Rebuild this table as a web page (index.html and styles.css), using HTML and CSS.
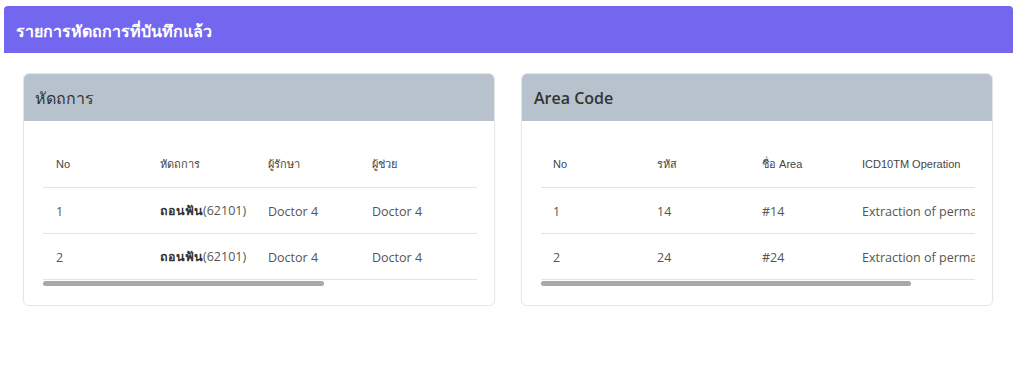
FILE: index.html
```html
<!DOCTYPE html>
<html lang="th">
<head>
<meta charset="utf-8">
<title>รายการหัดถการที่บันทึกแล้ว</title>
<link rel="stylesheet" href="styles.css">
</head>
<body>
<div class="page">
  <header class="page-bar">รายการหัดถการที่บันทึกแล้ว</header>
  <div class="cards">
    <section class="card">
      <div class="card-head">หัดถการ</div>
      <div class="card-body">
        <div class="scroller">
          <table class="grid grid-proc">
            <thead>
              <tr><th>No</th><th>หัดถการ</th><th>ผู้รักษา</th><th>ผู้ช่วย</th><th></th></tr>
            </thead>
            <tbody>
              <tr><td>1</td><td><b>ถอนฟัน</b>(62101)</td><td>Doctor 4</td><td>Doctor 4</td><td></td></tr>
              <tr><td>2</td><td><b>ถอนฟัน</b>(62101)</td><td>Doctor 4</td><td>Doctor 4</td><td></td></tr>
            </tbody>
          </table>
        </div>
        <div class="hscroll"><div class="hscroll-thumb" style="width: 64.7%"></div></div>
      </div>
    </section>
    <section class="card">
      <div class="card-head card-head-latin">Area Code</div>
      <div class="card-body">
        <div class="scroller">
          <table class="grid grid-area">
            <thead>
              <tr><th>No</th><th>รหัส</th><th>ชื่อ Area</th><th>ICD10TM Operation</th></tr>
            </thead>
            <tbody>
              <tr><td>1</td><td>14</td><td>#14</td><td>Extraction of permanent tooth</td></tr>
              <tr><td>2</td><td>24</td><td>#24</td><td>Extraction of permanent tooth</td></tr>
            </tbody>
          </table>
        </div>
        <div class="hscroll"><div class="hscroll-thumb" style="width: 85.3%"></div></div>
      </div>
    </section>
  </div>
</div>
</body>
</html>
```
FILE: styles.css
```css
html, body {
  margin: 0;
  background: #ffffff;
}

body {
  font-family: "Open Sans", "Noto Sans", sans-serif;
  color: #555555;
}

.page {
  padding: 6px 11px 0 4px;
}

.page-bar {
  background: #7367f0;
  color: #ffffff;
  font-size: 16px;
  font-weight: 700;
  height: 47px;
  line-height: 51px;
  padding-left: 12px;
  border-radius: 4px 4px 0 0;
}

.cards {
  display: flex;
  gap: 26px;
  padding: 20px 20px 0 19px;
}

.card {
  flex: 0 0 472px;
  border: 1px solid #e6e6e6;
  border-radius: 6px;
  overflow: hidden;
  box-sizing: border-box;
  box-shadow: 0 1px 2px rgba(0, 0, 0, 0.03);
}

.card-head {
  background: #b8c2cc;
  height: 47px;
  line-height: 49px;
  padding-left: 11px;
  font-size: 16px;
  color: #333333;
}

.card-head-latin {
  font-weight: 600;
  padding-left: 12px;
}

.card-body {
  padding: 21px 17px 18px 19px;
}

/* table viewport; the bar below stands in for its horizontal scrollbar */
.scroller {
  overflow: hidden;
}

.hscroll {
  height: 7px;
  padding-top: 1px;
  box-sizing: border-box;
}

.hscroll-thumb {
  height: 5px;
  border-radius: 3px;
  background: #a8a8a8;
}

.grid {
  border-collapse: collapse;
  white-space: nowrap;
  table-layout: fixed;
}

.grid th,
.grid td {
  text-align: left;
  padding: 0 0 0 13px;
  border-bottom: 1px solid #e3e3e3;
}

.grid th {
  font-family: "Liberation Sans", Arial, sans-serif;
  font-weight: 400;
  font-size: 11px;
  color: #444444;
  height: 43px;
  padding-bottom: 2px;
}

.grid td {
  font-size: 12.5px;
  color: #555555;
  height: 44px;
  padding-top: 1px;
}

.grid td b {
  color: #333333;
  font-weight: 700;
}

.grid-proc {
  width: 670px;
}

.grid-proc th:nth-child(1) { width: 91px; }
.grid-proc th:nth-child(2) { width: 95px; }
.grid-proc th:nth-child(3) { width: 91px; }
.grid-proc th:nth-child(4) { width: 91px; }

.grid-area {
  width: 509px;
}

.grid-area th,
.grid-area td {
  padding-left: 12px;
}

.grid-area th:nth-child(1) { width: 92px; }
.grid-area th:nth-child(2) { width: 93px; }
.grid-area th:nth-child(3) { width: 88px; }
```
